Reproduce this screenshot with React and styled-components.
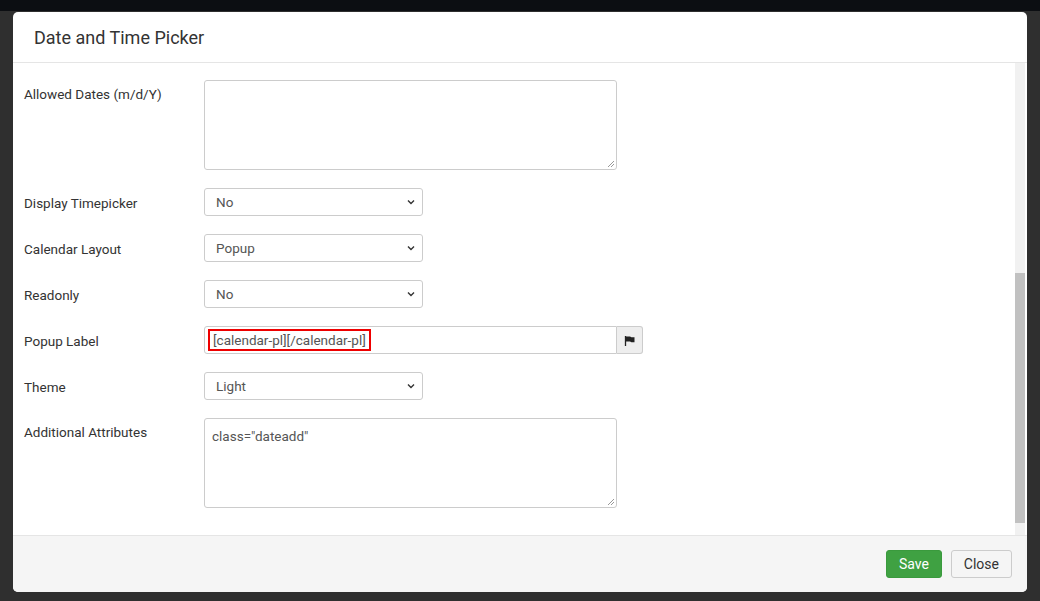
import React from "react";
import styled, { createGlobalStyle } from "styled-components";

const G = createGlobalStyle`
  html,body{margin:0;padding:0;}
  body{font-family:Roboto,"Liberation Sans",Arial,sans-serif;background:#2e2e2e;width:1040px;height:601px;overflow:hidden;}
`;
const Page = styled.div`
  width:1040px;height:601px;box-sizing:border-box;
  background:linear-gradient(#0c0e12 0,#0c0e12 11px,#2f2f2f 11px);
  padding:12px 13px 9px 13px;
`;
const Modal = styled.div`
  height:580px;background:#fff;border-radius:5px;display:flex;flex-direction:column;overflow:hidden;
`;
const Header = styled.div`
  height:50px;flex:none;border-bottom:1px solid #e5e5e5;display:flex;align-items:center;padding-left:21px;
  font-size:18px;color:#333;
`;
const BodyWrap = styled.div`flex:1;display:flex;min-height:0;`;
const Body = styled.div`flex:1;padding:17px 11px 0 11px;display:flex;flex-direction:column;gap:18px;`;
const Scroll = styled.div`
  width:10px;margin-right:2px;background:#f1f1f1;display:flex;flex-direction:column;
  &>div:nth-child(1){height:12px;}
  &>div:nth-child(2){height:198px;}
  &>div:nth-child(3){flex:1;background:#c1c1c1;}
  &>div:nth-child(4){height:12px;}
`;
const Row = styled.div`display:flex;align-items:flex-start;`;
const Label = styled.div`width:180px;font-size:13.5px;color:#333;padding-top:${p=>p.$pt||7}px;`;
const Area = styled.div`
  width:413px;height:90px;box-sizing:border-box;border:1px solid #ccc;border-radius:3px;
  padding:9px 7px;font-size:13.5px;color:#555;position:relative;
  &::after{content:"";position:absolute;right:2px;bottom:2px;width:6px;height:6px;
    background:linear-gradient(135deg,transparent 45%,#999 45%,#999 55%,transparent 55%,transparent 70%,#999 70%,#999 80%,transparent 80%);}
`;
const Select = styled.div`
  width:219px;height:28px;box-sizing:border-box;border:1px solid #ccc;border-radius:3px;
  display:flex;align-items:center;justify-content:space-between;padding:0 6px 0 11px;font-size:13.5px;color:#555;
`;
const InputGroup = styled.div`display:flex;height:28px;`;
const Input = styled.div`
  width:413px;box-sizing:border-box;border:1px solid #ccc;border-radius:3px 0 0 3px;padding:2px 3px;display:flex;align-items:center;
`;
const Hl = styled.span`border:2px solid #e00;padding:1px 3px;font-size:13.5px;color:#555;`;
const Addon = styled.div`
  width:26px;box-sizing:border-box;border:1px solid #ccc;border-left:none;border-radius:0 3px 3px 0;background:#eee;
  display:flex;align-items:center;justify-content:center;
`;
const Footer = styled.div`
  height:56px;flex:none;background:#f5f5f5;border-top:1px solid #e5e5e5;display:flex;align-items:center;justify-content:flex-end;
  gap:9px;padding-right:15px;
`;
const Btn = styled.div`
  height:28px;box-sizing:border-box;padding:0 12px;display:flex;align-items:center;border-radius:3px;font-size:14px;
  background:${p=>p.$primary?"#3fa142":"#f5f5f5"};color:${p=>p.$primary?"#fff":"#333"};
  border:1px solid ${p=>p.$primary?"#3a9a3d":"#ccc"};
`;
const Chev = () => (<svg width="10" height="10" viewBox="0 0 10 10"><path d="M2 3.5L5 6.5L8 3.5" stroke="#333" strokeWidth="1.4" fill="none"/></svg>);

const Sel = ({l,v}) => (<Row><Label>{l}</Label><Select>{v}<Chev/></Select></Row>);

export default function App(){
  return (<Page><G/><Modal>
    <Header>Date and Time Picker</Header>
    <BodyWrap>
      <Body>
        <Row><Label $pt={6}>Allowed Dates (m/d/Y)</Label><Area/></Row>
        <Sel l="Display Timepicker" v="No"/>
        <Sel l="Calendar Layout" v="Popup"/>
        <Sel l="Readonly" v="No"/>
        <Row><Label>Popup Label</Label><InputGroup><Input><Hl>[calendar-pl][/calendar-pl]</Hl></Input>
          <Addon><svg width="11" height="11" viewBox="0 0 11 11"><path d="M1.5 1v10" stroke="#222" strokeWidth="1.3"/><path d="M2 1.5h3.5c1 0 1.5.8 3 .8h2v5h-2c-1.5 0-2-.8-3-.8H2z" fill="#222"/></svg></Addon></InputGroup></Row>
        <Sel l="Theme" v="Light"/>
        <Row><Label $pt={6}>Additional Attributes</Label><Area>class="dateadd"</Area></Row>
      </Body>
      <Scroll><div/><div/><div/><div/></Scroll>
    </BodyWrap>
    <Footer><Btn $primary>Save</Btn><Btn>Close</Btn></Footer>
  </Modal></Page>);
}
